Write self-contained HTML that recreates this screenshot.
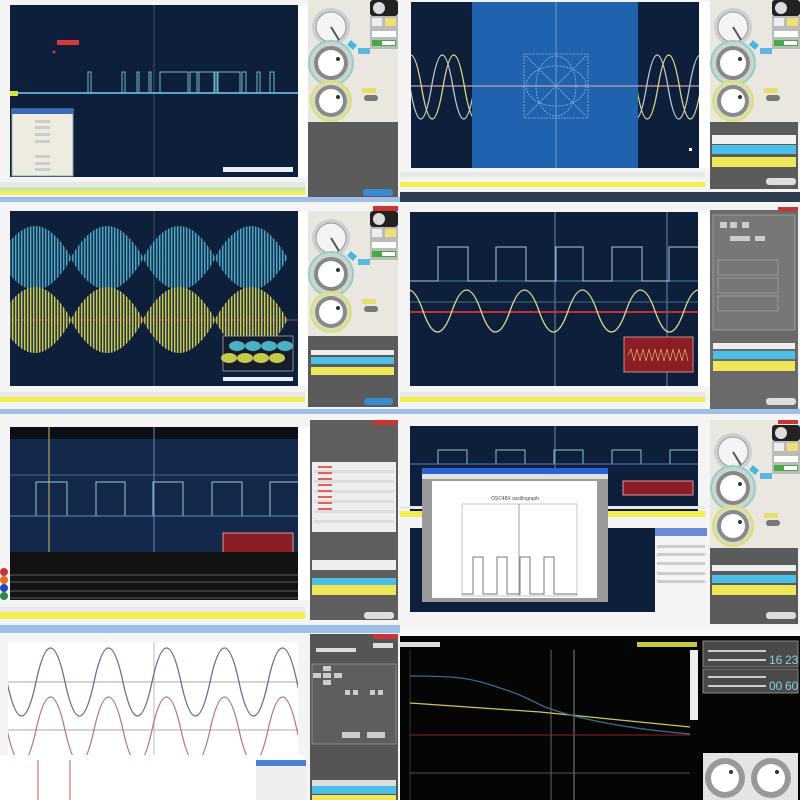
<!DOCTYPE html>
<html><head><meta charset="utf-8"><style>
html,body{margin:0;padding:0;background:#f2f2f2;width:800px;height:800px;overflow:hidden}
svg{display:block;font-family:"Liberation Sans",sans-serif}
</style></head><body>
<svg width="800" height="800" viewBox="0 0 800 800" xmlns="http://www.w3.org/2000/svg">
<defs>
<pattern id="sc" width="3" height="10" patternUnits="userSpaceOnUse"><rect width="3" height="10" fill="#18324f"/><rect width="1.4" height="10" fill="#4aa9c4"/></pattern>
<pattern id="sy" width="3" height="10" patternUnits="userSpaceOnUse"><rect width="3" height="10" fill="#2a3a38"/><rect width="1.4" height="10" fill="#c9c95a"/></pattern>
<g id="knobs">
 <rect x="0" y="0" width="90" height="125" fill="#e9e7e0"/>
 <circle cx="23" cy="27" r="19" fill="#cfcfcf"/><circle cx="23" cy="27" r="15" fill="#f4f4f4" stroke="#999"/>
 <line x1="23" y1="27" x2="31" y2="40" stroke="#555" stroke-width="2"/>
 <circle cx="23" cy="63" r="22" fill="#c9d6cf" stroke="#9cc" stroke-width="2"/><circle cx="23" cy="63" r="17" fill="#888"/><circle cx="23" cy="63" r="13" fill="#fff"/><circle cx="30" cy="59" r="2" fill="#333"/>
 <rect x="40" y="42" width="8" height="6" fill="#4ab6e0" transform="rotate(40 44 45)"/><rect x="50" y="48" width="12" height="6" fill="#5ab8e0"/>
 <circle cx="23" cy="101" r="20" fill="#d8dcc0" stroke="#dde070" stroke-width="2"/><circle cx="23" cy="101" r="16" fill="#8a8a8a"/><circle cx="23" cy="101" r="12" fill="#fff"/><circle cx="30" cy="97" r="2" fill="#333"/>
 <rect x="54" y="88" width="14" height="5" fill="#e6e06a"/><rect x="56" y="95" width="14" height="6" rx="3" fill="#777"/>
 <rect x="62" y="0" width="28" height="16" rx="3" fill="#222"/><circle cx="71" cy="8" r="6" fill="#ddd"/>
 <rect x="62" y="16" width="28" height="33" fill="#bbb"/><rect x="64" y="18" width="10" height="8" fill="#eee"/><rect x="77" y="18" width="11" height="8" fill="#f0e070"/>
 <rect x="64" y="31" width="24" height="6" fill="#fff"/><rect x="64" y="40" width="24" height="6" fill="#4a4"/><rect x="74" y="41" width="13" height="4" fill="#fff"/>
</g>
</defs>

<!-- ===== Row 1 left ===== -->
<rect x="0" y="0" width="400" height="203" fill="#f4f4f4"/>
<rect x="10" y="5" width="288" height="172" fill="#0e1f3b"/>
<line x1="154" y1="5" x2="154" y2="177" stroke="#3a4d6a"/>
<line x1="10" y1="93" x2="298" y2="93" stroke="#5aa0c8" stroke-width="2"/>
<rect x="10" y="91" width="8" height="5" fill="#d8e040"/>
<path d="M88,93V72h3v21 M122,93V72h3v21 M137,93V72h2v21 M149,93V72h2v21 M160,93V72h28v21 M190,93V72h24v21 M197,93V72h2V93 M215,93V72h2v21 M218,93V72h22v21 M242,93V72h4v21 M257,93V72h3v21 M270,93V72h4v21" stroke="#6fb4c8" fill="none" stroke-width="1"/>
<rect x="57" y="40" width="22" height="5" fill="#d83a3a"/><circle cx="54" cy="52" r="1.5" fill="#d33"/>
<rect x="12" y="109" width="61" height="67" fill="#eeebe0" stroke="#8aa"/>
<rect x="12" y="109" width="61" height="5" fill="#3a6ac0"/>
<g fill="#ccc"><rect x="35" y="120" width="15" height="3"/><rect x="35" y="126" width="15" height="3"/><rect x="35" y="133" width="15" height="3"/><rect x="35" y="140" width="15" height="3"/><rect x="35" y="155" width="15" height="3"/><rect x="35" y="162" width="15" height="3"/><rect x="35" y="168" width="15" height="3"/></g>
<rect x="223" y="167" width="70" height="5" fill="#e8eef6"/>
<rect x="298" y="5" width="10" height="172" fill="#fff"/>
<use href="#knobs" x="308" y="0"/>
<rect x="308" y="122" width="90" height="75" fill="#5b5b5b"/>
<rect x="363" y="189" width="30" height="7" rx="3" fill="#3a8ad0"/>
<rect x="0" y="182" width="305" height="5" fill="#e8e8e8"/>
<rect x="0" y="187" width="305" height="4" fill="#c6e8a0"/>
<rect x="0" y="191" width="305" height="4" fill="#f2ee60"/>
<rect x="0" y="197" width="400" height="5" fill="#9ec0e6"/>

<!-- ===== Row 1 right ===== -->
<rect x="400" y="0" width="400" height="203" fill="#f4f4f4"/>
<rect x="411" y="2" width="288" height="166" fill="#0e1f3b"/>
<rect x="472" y="2" width="166" height="166" fill="#1f62ad"/>
<line x1="556" y1="2" x2="556" y2="168" stroke="#6c9ad0"/>
<line x1="411" y1="86" x2="699" y2="86" stroke="#c8a0a8" stroke-width="1.2"/>
<clipPath id="c2"><rect x="411" y="2" width="61" height="166"/><rect x="638" y="2" width="61" height="166"/></clipPath>
<g clip-path="url(#c2)" fill="none" stroke-width="1.3">
<path d="M400,87 q10.75,-64 21.5,0 t21.5,0 t21.5,0 t21.5,0 t21.5,0 t21.5,0 t21.5,0 t21.5,0 t21.5,0 t21.5,0 t21.5,0 t21.5,0 t21.5,0 t21.5,0" stroke="#d8d488"/>
<path d="M410,87 q10.75,64 21.5,0 t21.5,0 t21.5,0 t21.5,0 t21.5,0 t21.5,0 t21.5,0 t21.5,0 t21.5,0 t21.5,0 t21.5,0 t21.5,0 t21.5,0 t21.5,0" stroke="#b8c8c8"/>
</g>
<g fill="none" stroke="#8ab8e0" stroke-width="0.8" stroke-dasharray="2 1">
<rect x="524" y="54" width="64" height="64"/><ellipse cx="556" cy="86" rx="30" ry="20"/><ellipse cx="556" cy="86" rx="20" ry="30"/><path d="M526,56 L586,116 M586,56 L526,116"/>
</g>
<rect x="689" y="148" width="3" height="3" fill="#fff"/>
<rect x="699" y="2" width="11" height="166" fill="#fff"/>
<use href="#knobs" x="710" y="0"/>
<rect x="710" y="122" width="88" height="67" fill="#5b5b5b"/>
<rect x="712" y="135" width="84" height="9" fill="#f0f0f0"/><rect x="712" y="145" width="84" height="9" fill="#4bbfe6"/><rect x="712" y="157" width="84" height="10" fill="#eee858"/>
<rect x="766" y="178" width="30" height="7" rx="3" fill="#ddd"/>
<rect x="400" y="172" width="305" height="5" fill="#e8e8e8"/>
<rect x="400" y="182" width="305" height="5" fill="#f2ee50"/>
<rect x="400" y="192" width="400" height="10" fill="#2d3c4e"/>
<rect x="780" y="206" width="20" height="3" fill="#c33"/>

<!-- ===== Row 2 left ===== -->
<rect x="0" y="203" width="400" height="210" fill="#f4f4f4"/>
<rect x="10" y="211" width="288" height="175" fill="#0e1f3b"/>
<line x1="154" y1="211" x2="154" y2="386" stroke="#3a4d6a"/>
<clipPath id="cp3"><rect x="10" y="211" width="288" height="175"/></clipPath>
<path d="M-1,257 q36,-62 72,0 q36,-62 72,0 q36,-62 72,0 q36,-62 72,0 v2 q-36,62 -72,0 q-36,62 -72,0 q-36,62 -72,0 q-36,62 -72,0z" fill="url(#sc)" clip-path="url(#cp3)"/>
<path d="M-1,319 q36,-64 72,0 q36,-64 72,0 q36,-64 72,0 q36,-64 72,0 v2 q-36,64 -72,0 q-36,64 -72,0 q-36,64 -72,0 q-36,64 -72,0z" fill="url(#sy)" clip-path="url(#cp3)"/>
<line x1="10" y1="320" x2="298" y2="320" stroke="#c86a4a" stroke-width="0.8"/>
<rect x="223" y="336" width="70" height="35" fill="#151d28" stroke="#889"/>
<g fill="#4ab0c8"><ellipse cx="237" cy="346" rx="8" ry="5"/><ellipse cx="253" cy="346" rx="8" ry="5"/><ellipse cx="269" cy="346" rx="8" ry="5"/><ellipse cx="285" cy="346" rx="8" ry="5"/></g>
<g fill="#c8c84a"><ellipse cx="229" cy="358" rx="8" ry="5"/><ellipse cx="245" cy="358" rx="8" ry="5"/><ellipse cx="261" cy="358" rx="8" ry="5"/><ellipse cx="277" cy="358" rx="8" ry="5"/></g>
<rect x="223" y="377" width="70" height="4" fill="#e8eef6"/>
<rect x="298" y="211" width="10" height="175" fill="#fff"/>
<use href="#knobs" x="308" y="211"/>
<rect x="308" y="336" width="90" height="71" fill="#5b5b5b"/>
<rect x="311" y="350" width="83" height="5" fill="#eee"/><rect x="311" y="357" width="83" height="7" fill="#4bbfe6"/><rect x="311" y="367" width="83" height="8" fill="#eee858"/>
<rect x="364" y="398" width="29" height="7" rx="3" fill="#3a8ad0"/>
<rect x="0" y="392" width="305" height="5" fill="#e8e8e8"/>
<rect x="0" y="397" width="305" height="5" fill="#f2ee50"/>
<rect x="0" y="409" width="400" height="5" fill="#9ec0e6"/>
<rect x="373" y="206" width="25" height="5" fill="#c33"/>

<!-- ===== Row 2 right ===== -->
<rect x="400" y="203" width="400" height="210" fill="#f4f4f4"/>
<rect x="410" y="212" width="288" height="174" fill="#0e1f3b"/>
<line x1="555" y1="212" x2="555" y2="386" stroke="#6a8ab0"/><line x1="667" y1="212" x2="667" y2="386" stroke="#6a8ab0"/>
<line x1="410" y1="281" x2="698" y2="281" stroke="#3a80b8"/>
<line x1="410" y1="302" x2="698" y2="302" stroke="#3a7a80"/>
<line x1="410" y1="312" x2="698" y2="312" stroke="#c03038" stroke-width="2"/>
<path d="M410,281 H438 V247 H468 V281 H496 V247 H526 V281 H556 V247 H583 V281 H612 V247 H642 V281 H669 V247 H698" fill="none" stroke="#a8c8dc" stroke-width="1"/>
<clipPath id="c4"><rect x="410" y="212" width="288" height="174"/></clipPath>
<path d="M394,311 q14.5,-42 29,0 t29,0 t29,0 t29,0 t29,0 t29,0 t29,0 t29,0 t29,0 t29,0 t29,0" fill="none" stroke="#d8d890" stroke-width="1.3" clip-path="url(#c4)"/>
<rect x="624" y="337" width="69" height="35" fill="#8a1e24" stroke="#c88"/>
<path d="M628,355 l3,-6 3,12 3,-12 3,12 3,-12 3,12 3,-12 3,12 3,-12 3,12 3,-12 3,12 3,-12 3,12 3,-12 3,12 3,-12 3,12 3,-12 3,12" fill="none" stroke="#e8a060" stroke-width="0.8"/>
<rect x="698" y="212" width="12" height="174" fill="#fff"/>
<rect x="710" y="210" width="88" height="200" fill="#6a6a6a"/>
<rect x="713" y="215" width="82" height="115" fill="#777" stroke="#999"/>
<g fill="#ccc"><rect x="720" y="222" width="7" height="6"/><rect x="730" y="222" width="7" height="6"/><rect x="742" y="222" width="7" height="6"/><rect x="730" y="236" width="20" height="5"/><rect x="755" y="236" width="10" height="5"/></g>
<g fill="none" stroke="#999"><rect x="718" y="260" width="60" height="15"/><rect x="718" y="278" width="60" height="15"/><rect x="718" y="296" width="60" height="15"/></g>
<rect x="713" y="343" width="82" height="6" fill="#eee"/><rect x="713" y="351" width="82" height="8" fill="#4bbfe6"/><rect x="713" y="361" width="82" height="10" fill="#eee858"/>
<rect x="766" y="398" width="30" height="7" rx="3" fill="#ddd"/>
<rect x="400" y="392" width="305" height="5" fill="#e8e8e8"/>
<rect x="400" y="397" width="305" height="5" fill="#f2ee50"/>
<rect x="400" y="409" width="400" height="5" fill="#9ec0e6"/>
<rect x="778" y="207" width="20" height="4" fill="#c33"/>

<!-- ===== Row 3 left ===== -->
<rect x="0" y="414" width="400" height="214" fill="#f4f4f4"/>
<rect x="10" y="427" width="288" height="125" fill="#13284a"/>
<rect x="10" y="427" width="288" height="12" fill="#0a0f18"/>
<line x1="49" y1="427" x2="49" y2="600" stroke="#c8c060"/>
<line x1="154" y1="427" x2="154" y2="600" stroke="#6a8ab0"/>
<line x1="10" y1="475" x2="298" y2="475" stroke="#4a6a8a"/>
<path d="M10,516 H36 V482 H67 V516 H96 V482 H125 V516 H153 V482 H183 V516 H212 V482 H242 V516 H270 V482 H298" fill="none" stroke="#9ac8dc"/>
<line x1="10" y1="516" x2="298" y2="516" stroke="#5a90c0"/>
<rect x="223" y="533" width="70" height="35" fill="#8a1e24" stroke="#d99"/>
<rect x="10" y="552" width="288" height="48" fill="#121212"/>
<g stroke="#777" fill="none" stroke-width="0.8"><path d="M10,575 H298 M10,582 H298 M10,591 H298 M10,598 H298"/></g>
<circle cx="4" cy="572" r="4" fill="#c33"/><circle cx="4" cy="580" r="4" fill="#e07020"/><circle cx="4" cy="588" r="4" fill="#2244c0"/><circle cx="4" cy="596" r="4" fill="#2a8a4a"/>
<rect x="298" y="427" width="12" height="173" fill="#fff"/>
<rect x="310" y="420" width="88" height="200" fill="#5e5e5e"/>
<rect x="312" y="462" width="84" height="70" fill="#eee"/>
<g fill="#ddd"><rect x="314" y="470" width="80" height="3"/><rect x="314" y="480" width="80" height="3"/><rect x="314" y="490" width="80" height="3"/><rect x="314" y="500" width="80" height="3"/><rect x="314" y="510" width="80" height="3"/><rect x="314" y="520" width="80" height="3"/></g>
<g fill="#e06060"><rect x="318" y="466" width="14" height="2"/><rect x="318" y="472" width="14" height="2"/><rect x="318" y="478" width="14" height="2"/><rect x="318" y="484" width="14" height="2"/><rect x="318" y="490" width="14" height="2"/><rect x="318" y="496" width="14" height="2"/><rect x="318" y="502" width="14" height="2"/><rect x="318" y="508" width="14" height="2"/></g>
<rect x="312" y="560" width="84" height="10" fill="#eee"/><rect x="312" y="578" width="84" height="7" fill="#4bbfe6"/><rect x="312" y="585" width="84" height="10" fill="#eee858"/>
<rect x="364" y="612" width="30" height="7" rx="3" fill="#ddd"/>
<rect x="0" y="607" width="305" height="5" fill="#e8e8e8"/>
<rect x="0" y="612" width="305" height="7" fill="#f2ee50"/>
<rect x="0" y="625" width="400" height="5" fill="#9ec0e6"/>
<rect x="373" y="420" width="25" height="5" fill="#c33"/>

<!-- ===== Row 3 right ===== -->
<rect x="400" y="414" width="400" height="214" fill="#f4f4f4"/>
<rect x="410" y="426" width="288" height="85" fill="#0e1f3b"/>
<line x1="555" y1="426" x2="555" y2="511" stroke="#6a8ab0"/>
<path d="M410,464 H438 V450 H467 V464 H496 V450 H525 V464 H554 V450 H583 V464 H612 V450 H641 V464 H670 V450 H698" fill="none" stroke="#8ac0d0"/>
<line x1="410" y1="464" x2="698" y2="464" stroke="#4a80b0"/>
<rect x="623" y="481" width="70" height="14" fill="#8a1e24" stroke="#d99"/>
<rect x="400" y="506" width="305" height="3" fill="#e8e8e8"/><rect x="400" y="511" width="305" height="6" fill="#f2ee50"/>
<rect x="410" y="528" width="245" height="84" fill="#0e1f3b"/>
<rect x="655" y="528" width="52" height="70" fill="#f4f4f4"/>
<rect x="655" y="528" width="52" height="8" fill="#6a8ad8"/>
<g fill="#ccc"><rect x="657" y="545" width="48" height="3"/><rect x="657" y="553" width="48" height="3"/><rect x="657" y="562" width="48" height="3"/><rect x="657" y="572" width="48" height="3"/><rect x="657" y="580" width="48" height="3"/></g>
<rect x="422" y="468" width="186" height="134" fill="#9a9a9a"/>
<rect x="422" y="468" width="186" height="6" fill="#2a62d8"/>
<rect x="422" y="474" width="186" height="5" fill="#e0e0e0"/>
<rect x="432" y="481" width="165" height="117" fill="#fff"/>
<text x="515" y="500" font-size="5" text-anchor="middle" fill="#444">OSC48X oscillograph</text>
<rect x="462" y="504" width="115" height="92" fill="none" stroke="#bbb" stroke-width="0.8"/>
<line x1="519" y1="504" x2="519" y2="596" stroke="#888" stroke-width="0.8"/>
<path d="M462,594 H473 V557 H483 V594 H497 V557 H507 V594 H520 V557 H530 V594 H544 V557 H554 V594 H577" fill="none" stroke="#777"/>
<rect x="710" y="420" width="88" height="125" fill="#e9e7e0"/>
<use href="#knobs" x="710" y="425"/>
<rect x="710" y="548" width="88" height="76" fill="#5b5b5b"/>
<rect x="712" y="565" width="84" height="6" fill="#eee"/><rect x="712" y="575" width="84" height="8" fill="#4bbfe6"/><rect x="712" y="585" width="84" height="10" fill="#eee858"/>
<rect x="766" y="612" width="30" height="7" rx="3" fill="#ddd"/>
<rect x="778" y="420" width="20" height="4" fill="#c33"/>

<!-- ===== Row 4 left ===== -->
<rect x="0" y="628" width="400" height="172" fill="#f4f4f4"/>
<rect x="0" y="628" width="400" height="5" fill="#9ec0e6"/>
<rect x="8" y="642" width="290" height="113" fill="#fff"/>
<line x1="154" y1="642" x2="154" y2="755" stroke="#bbb"/>
<line x1="8" y1="682" x2="298" y2="682" stroke="#aaa"/><line x1="8" y1="730" x2="298" y2="730" stroke="#aaa"/>
<clipPath id="c7"><rect x="8" y="642" width="290" height="113"/></clipPath>
<g clip-path="url(#c7)" fill="none" stroke-width="1.3">
<path d="M7,682 q14.5,68 29,0 t29,0 t29,0 t29,0 t29,0 t29,0 t29,0 t29,0 t29,0 t29,0 t29,0" stroke="#6a6e94"/>
<path d="M7,730 q14.5,66 29,0 t29,0 t29,0 t29,0 t29,0 t29,0 t29,0 t29,0 t29,0 t29,0 t29,0" stroke="#b87a8a"/>
</g>
<rect x="0" y="755" width="305" height="45" fill="#fff"/>
<line x1="38" y1="760" x2="38" y2="800" stroke="#c55"/><line x1="70" y1="760" x2="70" y2="800" stroke="#c55"/>
<rect x="256" y="760" width="50" height="40" fill="#eee"/><rect x="256" y="760" width="50" height="6" fill="#4a80d8"/>
<rect x="310" y="634" width="88" height="166" fill="#555"/>
<rect x="312" y="664" width="84" height="80" fill="#5e5e5e" stroke="#888"/>
<g fill="#ccc"><rect x="323" y="666" width="8" height="5"/><rect x="313" y="673" width="8" height="5"/><rect x="323" y="673" width="8" height="5"/><rect x="334" y="673" width="8" height="5"/><rect x="323" y="680" width="8" height="5"/><rect x="345" y="690" width="5" height="5"/><rect x="353" y="690" width="5" height="5"/><rect x="370" y="690" width="5" height="5"/><rect x="378" y="690" width="5" height="5"/><rect x="342" y="732" width="18" height="6"/><rect x="367" y="732" width="18" height="6"/></g>
<rect x="316" y="648" width="40" height="4" fill="#ddd"/><rect x="373" y="643" width="20" height="5" fill="#ddd"/>
<rect x="312" y="780" width="84" height="6" fill="#ddd"/><rect x="312" y="786" width="84" height="8" fill="#4bbfe6"/><rect x="312" y="795" width="84" height="5" fill="#eee858"/>
<rect x="373" y="634" width="25" height="5" fill="#c33"/>

<!-- ===== Row 4 right ===== -->
<rect x="400" y="628" width="400" height="172" fill="#f8f8f8"/>
<rect x="400" y="636" width="400" height="164" fill="#050505"/>
<rect x="400" y="642" width="40" height="5" fill="#ddd"/>
<rect x="637" y="642" width="60" height="5" fill="#c8c840"/>
<line x1="410" y1="650" x2="410" y2="800" stroke="#333"/>
<line x1="551" y1="650" x2="551" y2="800" stroke="#666"/><line x1="574" y1="650" x2="574" y2="800" stroke="#888"/>
<line x1="410" y1="735" x2="690" y2="735" stroke="#8a1e2a"/>
<line x1="410" y1="773" x2="690" y2="773" stroke="#555"/>
<path d="M410,703 L540,712 L690,727" fill="none" stroke="#c8c860" stroke-width="1.3"/>
<path d="M410,676 C460,676 470,678 500,688 C520,694 530,700 545,707 C575,718 620,728 690,734" fill="none" stroke="#3c6a8a" stroke-width="1.3"/>
<rect x="690" y="650" width="8" height="70" fill="#eee"/>
<rect x="703" y="641" width="95" height="26" fill="#4a4a4a" stroke="#888"/>
<rect x="703" y="669" width="95" height="24" fill="#4a4a4a" stroke="#888"/>
<rect x="708" y="650" width="58" height="2" fill="#ccc"/><rect x="708" y="659" width="58" height="2" fill="#ccc"/>
<rect x="708" y="676" width="58" height="2" fill="#ccc"/><rect x="708" y="685" width="58" height="2" fill="#ccc"/>
<text x="769" y="664" font-size="12" fill="#8ad0d8">16</text><text x="785" y="664" font-size="12" fill="#8ad0d8">23</text>
<text x="769" y="690" font-size="12" fill="#8ad0d8">00</text><text x="785" y="690" font-size="12" fill="#8ad0d8">60</text>
<rect x="703" y="753" width="95" height="47" fill="#e4e4e4"/>
<circle cx="725" cy="778" r="20" fill="#999"/><circle cx="725" cy="778" r="14" fill="#fff"/>
<circle cx="771" cy="778" r="20" fill="#999"/><circle cx="771" cy="778" r="14" fill="#fff"/>
<circle cx="731" cy="772" r="2" fill="#333"/><circle cx="777" cy="772" r="2" fill="#333"/>
</svg>
</body></html>
